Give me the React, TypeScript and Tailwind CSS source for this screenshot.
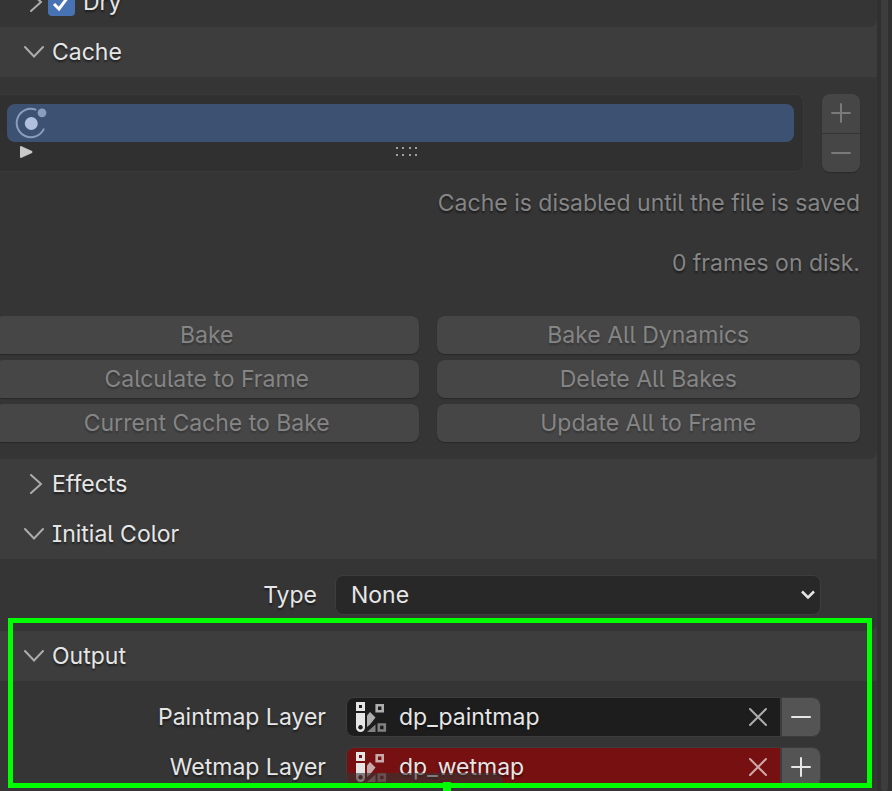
import { useState } from "react";
import type { ReactNode } from "react";

const bakeActions = [
  "Bake",
  "Bake All Dynamics",
  "Calculate to Frame",
  "Delete All Bakes",
  "Current Cache to Bake",
  "Update All to Frame"
];

function ChevronDown() {
  return (
    <svg viewBox="0 0 20 20" className="h-5 w-5 shrink-0" fill="none" stroke="#acacac" strokeWidth="2" strokeLinecap="round">
      <path d="M1 5l9 9.5L19 5" />
    </svg>
  );
}

function ChevronRight() {
  return (
    <svg viewBox="0 0 20 20" className="h-5 w-5 shrink-0" fill="none" stroke="#acacac" strokeWidth="2" strokeLinecap="round">
      <path d="M7 1l10 9-10 9" />
    </svg>
  );
}

function PlusIcon() {
  return (
    <svg viewBox="0 0 20 20" className="h-5 w-5" fill="none" stroke="currentColor" strokeWidth="2" strokeLinecap="round">
      <path d="M1 10h18M10 1v18" />
    </svg>
  );
}

function MinusIcon() {
  return (
    <svg viewBox="0 0 20 20" className="h-5 w-5" fill="none" stroke="currentColor" strokeWidth="2" strokeLinecap="round">
      <path d="M1 10h18" />
    </svg>
  );
}

function ClearIcon() {
  return (
    <svg viewBox="0 0 20 20" className="h-5 w-5" fill="none" stroke="currentColor" strokeWidth="2" strokeLinecap="round">
      <path d="M2 2l16 16M18 2L2 18" />
    </svg>
  );
}

function PhysicsIcon() {
  return (
    <svg viewBox="0 0 32 32" className="h-8 w-8" fill="none">
      <path d="M20.5 2.6A14.2 14.2 0 1 0 28.6 22.4" stroke="#8b9dbd" strokeWidth="2" strokeLinecap="round" />
      <circle cx="16.3" cy="16.5" r="6.5" fill="#b0c0de" />
      <circle cx="27" cy="5.8" r="4.4" fill="#8b9dbd" />
    </svg>
  );
}

function AttributeIcon() {
  return (
    <svg viewBox="0 0 32 32" className="h-8 w-8 shrink-0" fill="none">
      <path d="M2.5 2.5h6v6h-6z" stroke="#e6e6e6" strokeWidth="3" />
      <path d="M1 12h9v14.5a4.5 4.5 0 0 1-9 0z M5.500 24a2.300 2.300 0 1 0 .01 0z" fill="#e6e6e6" fillRule="evenodd" />
      <path d="M12 14.500l3-3.500 5.500 5.500-5.500 7-3 2.500z" fill="#e6e6e6" opacity=".72" />
      <path d="M21.700 4.200h6v6h-6z" stroke="#e6e6e6" strokeWidth="2.600" opacity=".72" />
      <path d="M12 31l8.500-7.500V31z" fill="#e6e6e6" opacity=".5" />
      <path d="M23.800 23.500h6v6h-6z" stroke="#e6e6e6" strokeWidth="2.600" opacity=".5" />
    </svg>
  );
}

function PanelHeader({ title, open = false }: { title: string; open?: boolean }) {
  return (
    <button type="button" aria-expanded={open} className="flex h-[50px] w-full items-center gap-2 bg-[#3d3d3d] pl-6 text-left text-shadow-[0_2px_2px_#00000080]">
      {open ? <ChevronDown /> : <ChevronRight />}
      <span>{title}</span>
    </button>
  );
}

function PanelBody({ children, className }: { children: ReactNode; className: string }) {
  return <div className={`rounded-br-lg bg-[#353535] ${className}`}>{children}</div>;
}

type LayerFieldProps = {
  id: string;
  label: string;
  initial: string;
  exists?: boolean;
};

function LayerField({ id, label, initial, exists = false }: LayerFieldProps) {
  const [name, setName] = useState(initial);

  return (
    <div className="flex items-center">
      <label htmlFor={id} className="w-[346px] shrink-0 pr-5 text-right">
        {label}
      </label>
      <div
        className={`flex h-10 min-w-0 flex-1 items-center rounded-l-lg border border-[#3d3d3d] pr-3 pl-2 ${
          exists ? "bg-[#1d1d1d]" : "bg-[#771111]"
        }`}
      >
        <AttributeIcon />
        <input
          id={id}
          value={name}
          onChange={(event) => setName(event.target.value)}
          className="ml-3 min-w-0 flex-1 bg-transparent text-shadow-[0_2px_2px_#00000080] outline-none"
        />
        <button
          type="button"
          aria-label={`Clear ${label}`}
          onClick={() => setName("")}
          className={exists ? "text-[#acacac]" : "text-[#cfa8a8]"}
        >
          <ClearIcon />
        </button>
      </div>
      <button
        type="button"
        aria-label={exists ? `Remove ${label}` : `Add ${label}`}
        className="flex h-10 w-10 items-center justify-center rounded-r-lg border border-[#3d3d3d] bg-[#545454] bg-clip-padding"
      >
        {exists ? <MinusIcon /> : <PlusIcon />}
      </button>
    </div>
  );
}

export default function App() {
  const [dry, setDry] = useState(true);

  return (
    <div className="flex min-h-screen overflow-hidden bg-[#303030] font-['Inter',sans-serif] text-[23px] leading-7 text-[#e6e6e6] [font-feature-settings:'cv05','cv08']">
      <main className="min-w-0 flex-1 bg-[#3d3d3d]">
        {/* scrolled partly out of view */}
        <PanelBody className="flex h-[27px] items-end overflow-hidden">
          <div className="flex h-[50px] shrink-0 items-center pl-6">
            <ChevronRight />
            <label className="ml-1 flex items-center gap-2 text-shadow-[0_2px_2px_#00000080]">
              <span className="grid">
                <input
                  type="checkbox"
                  checked={dry}
                  onChange={(event) => setDry(event.target.checked)}
                  className="col-start-1 row-start-1 h-[27px] w-[27px] appearance-none rounded bg-[#545454] checked:bg-[#4772b3]"
                />
                {dry ? (
                  <svg viewBox="0 0 27 27" className="pointer-events-none col-start-1 row-start-1 h-[27px] w-[27px]" fill="none" stroke="#fff" strokeWidth="3">
                    <path d="M6 15l5 5 9-12" />
                  </svg>
                ) : null}
              </span>
              Dry
            </label>
          </div>
        </PanelBody>

        <section>
          <PanelHeader title="Cache" open />
          <PanelBody className="pt-[17px] pr-[17px] pb-[17px] text-[#858585]">
            <div className="flex gap-[18px]">
              <div className="h-[78px] min-w-0 flex-1 rounded-r-lg border border-l-0 border-[#3a3a3a] bg-[#303030] pt-[9px] pr-[9px] pl-[7px]">
                <ul>
                  <li className="flex h-[38px] items-center rounded-lg bg-[#3d5273] pl-2">
                    <PhysicsIcon />
                  </li>
                </ul>
                <div className="grid h-5 grid-cols-[1fr_auto_1fr] items-center pl-3">
                  <button type="button" aria-label="Show filter options" className="w-4">
                    <svg viewBox="0 0 16 14" className="h-[14px] w-4" fill="#c8c8c8">
                      <path d="M1 2q0-1 1-1l11 5q1 1 0 2L2 13q-1 0-1-1z" />
                    </svg>
                  </button>
                  <svg viewBox="0 0 24 10" className="h-[10px] w-6" fill="#a0a0a0">
                    <path d="M1 0h2v2H1zM7 0h2v2H7zM14 0h2v2h-2zM20 0h2v2h-2zM1 7h2v2H1zM7 7h2v2H7zM14 7h2v2h-2zM20 7h2v2h-2z" />
                  </svg>
                </div>
              </div>
              <div className="flex w-[38px] flex-col gap-px overflow-hidden rounded-lg text-[#7a7a7a] shadow-[0_1px_1px_#00000040]">
                <button type="button" disabled aria-label="Add cache" className="flex flex-1 items-center justify-center bg-[#464646]">
                  <PlusIcon />
                </button>
                <button type="button" disabled aria-label="Remove cache" className="flex flex-1 items-center justify-center bg-[#464646]">
                  <MinusIcon />
                </button>
              </div>
            </div>

            <div className="mt-[17px] flex flex-col gap-8 text-right text-shadow-[0_2px_2px_#00000080]">
              <p>Cache is disabled until the file is saved</p>
              <p>0 frames on disk.</p>
            </div>

            <div className="mt-[39px] -ml-[5px] grid grid-cols-2 gap-x-[18px] gap-y-[6px]">
              {bakeActions.map((action) => (
                <button
                  key={action}
                  type="button"
                  disabled
                  className="h-[38px] rounded-lg bg-[#464646] shadow-[0_1px_1px_#00000040] text-shadow-[0_2px_2px_#00000040]"
                >
                  {action}
                </button>
              ))}
            </div>
          </PanelBody>
        </section>

        <PanelHeader title="Effects" />

        <section>
          <PanelHeader title="Initial Color" open />
          <PanelBody className="flex items-center pt-4 pr-14 pb-4 text-shadow-[0_2px_2px_#00000080]">
            <label htmlFor="color-type" className="w-[335px] shrink-0 pr-[18px] text-right">
              Type
            </label>
            <div className="grid min-w-0 flex-1 items-center">
              <select
                id="color-type"
                className="col-start-1 row-start-1 h-10 w-full appearance-none rounded-lg border border-[#3d3d3d] bg-[#282828] px-[15px] outline-none"
              >
                <option>None</option>
                <option>Color</option>
                <option>UV Texture</option>
                <option>Vertex Color</option>
              </select>
              <svg viewBox="0 0 14 10" className="pointer-events-none col-start-1 row-start-1 mr-[6px] h-[10px] w-[14px] justify-self-end" fill="none" stroke="#e6e6e6" strokeWidth="2.500">
                <path d="M1 1.500l6 6 6-6" />
              </svg>
            </div>
          </PanelBody>
        </section>

        <section className="relative">
          <PanelHeader title="Output" open />
          <div className="flex flex-col gap-[10px] bg-[#353535] pt-4 pr-14 pb-1 text-shadow-[0_2px_2px_#00000080]">
            <LayerField id="paintmap-layer" label="Paintmap Layer" initial="dp_paintmap" exists />
            <LayerField id="wetmap-layer" label="Wetmap Layer" initial="dp_wetmap" />
          </div>
          {/* panel edge fading in over the last row */}
          <div className="pointer-events-none absolute bottom-0 left-[340px] h-[18px] w-[163px] rounded-tr-lg bg-[#353535]/60" />
          <div className="pointer-events-none absolute -top-[13px] right-[5px] bottom-[3px] left-2 border-5 border-[#00ff00]" />
          <div className="pointer-events-none absolute bottom-0 left-[443px] h-[9px] w-2 bg-[#00ff00]" />
        </section>
      </main>

      <div className="mr-1 ml-1 w-[7px] shrink-0 rounded-b bg-[#3d3d3d]" />
    </div>
  );
}
